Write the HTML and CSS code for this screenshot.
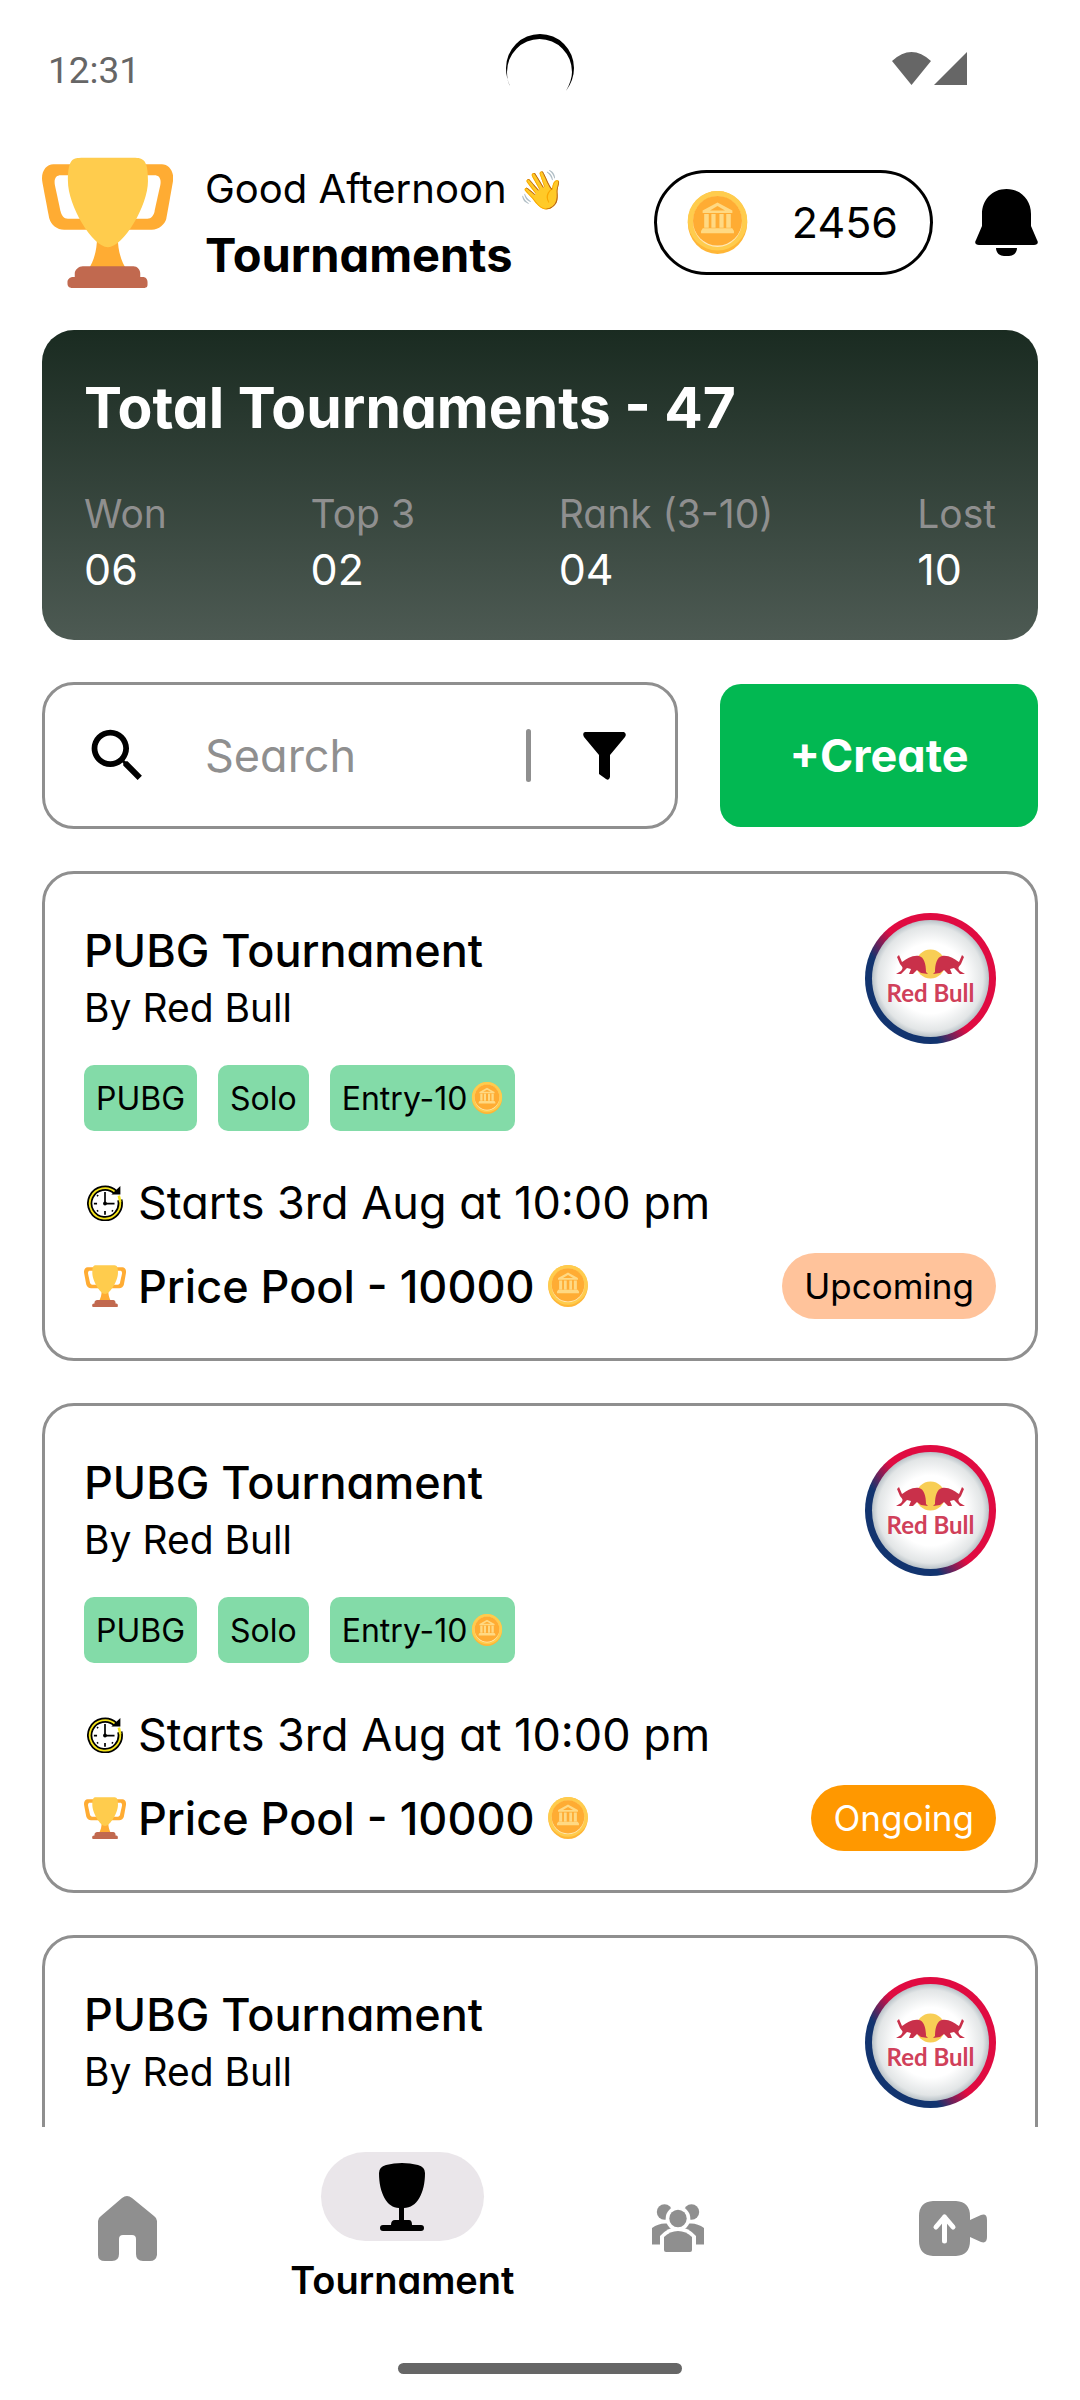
FILE: index.html
```html
<!DOCTYPE html>
<html lang="en">
<head>
<meta charset="utf-8">
<meta name="viewport" content="width=device-width, initial-scale=1">
<title>Tournaments</title>
<link rel="stylesheet" href="styles.css">
</head>
<body>
<svg class="sprite" aria-hidden="true">
  <defs>
    <linearGradient id="ring" x1="0.1" y1="0.75" x2="0.8" y2="0.2">
      <stop offset="0.25" stop-color="#12346f"/>
      <stop offset="0.5" stop-color="#e00b41"/>
    </linearGradient>
    <radialGradient id="plate" cx="0.5" cy="0.5" r="0.5">
      <stop offset="0.6" stop-color="#ffffff"/>
      <stop offset="0.9" stop-color="#e2e5e6"/>
      <stop offset="1" stop-color="#b9c2c8"/>
    </radialGradient>
  </defs>
  <symbol id="trophy" viewBox="0 0 36 36">
    <path fill="#FFAC33" d="M5.123 5h6C12.227 5 13 4.896 13 6V4c0-1.104-.773-2-1.877-2h-8c-2 0-3.583 2.125-3 5 0 0 1.791 9.375 1.917 9.958C2.373 18.5 4.164 20 6.081 20h6.958c1.105 0-.039-1.896-.039-3v-2c0 1.104-.773 2-1.877 2h-4c-1.104 0-1.833-1.042-2-2S3.539 7.667 3.539 7.667C3.206 5.75 4.018 5 5.123 5zm25.812 0h-6C23.831 5 22 4.896 22 6V4c0-1.104 1.831-2 2.935-2h8c2 0 3.584 2.125 3 5 0 0-1.633 9.419-1.771 10-.354 1.5-2.042 3-4 3h-7.146C21.914 20 22 18.104 22 17v-2c0 1.104 1.831 2 2.935 2h4c1.104 0 1.834-1.042 2-2s1.584-7.333 1.584-7.333C32.851 5.75 32.04 5 30.935 5zM20.832 22c0-6.958-2.709 0-2.709 0s-3-6.958-3 0-3.291 10-3.291 10h12.292c-.001 0-3.292-3.042-3.292-10z"/>
    <path fill="#FFCC4D" d="M29.123 6.577c0 6.775-6.77 18.192-11 18.192-4.231 0-11-11.417-11-18.192 0-5.195 1-6.319 3-6.319 1.374 0 6.025-.027 8-.027l7-.001c2.917-.001 4 .684 4 6.347z"/>
    <path fill="#C1694F" d="M27 33c0 1.104.227 2-.877 2h-16C9.018 35 9 34.104 9 33v-1c0-1.104 1.164-2 2.206-2h13.917c1.042 0 1.877.896 1.877 2v1z"/>
    <path fill="#C1694F" d="M29 34.625c0 .76.165 1.375-1.252 1.375H8.498C7.206 36 7 35.385 7 34.625v-.25C7 33.615 7.738 33 8.498 33h19.25c.759 0 1.252.615 1.252 1.375v.25z"/>
  </symbol>
  <symbol id="coin" viewBox="0 0 36 36">
    <ellipse cx="18" cy="18" rx="17" ry="18" fill="#FFB636"/>
    <ellipse cx="18" cy="17" rx="17" ry="17" fill="#FFCC4D"/>
    <ellipse cx="18" cy="17.500" rx="14" ry="14.500" fill="#FFE8B6"/>
    <ellipse cx="18" cy="17" rx="14" ry="14.200" fill="#FFAC33"/>
    <path fill="#FFD983" d="M18 6.500L26.500 11.200V12.600H9.500V11.200zM10.400 13.200h2.600V21h-2.600zM14.500 13.200h2.400V21h-2.400zM19.100 13.200h2.400V21h-2.400zM23 13.200h2.600V21H23zM9.600 21.300h16.800l1 1.500V24.200H8.600V22.800z"/>
    <path fill="#FFAC33" d="M18 8.600l4.300 2.500h-8.600z"/>
  </symbol>
  <symbol id="clock" viewBox="0 0 34 34">
    <path d="M27 7A14.400 14.400 0 1 0 31 14" fill="none" stroke="#000" stroke-width="5"/>
    <path d="M27 7A14.400 14.400 0 1 0 31 14" fill="none" stroke="#f5e41c" stroke-width="1.700"/>
    <path d="M23 9h8.500V1z"/>
    <path d="M30 10l1.500 6" fill="none" stroke="#f5e41c" stroke-width="2.400"/>
    <path d="M17 6.500V17.500H26M17 24.500v3.500M6.500 17.500h3M9.500 9.500l1 1M9.500 25l1-1M24.500 25l-1-1" fill="none" stroke="#000" stroke-width="1.600"/>
    <circle cx="17" cy="17.500" r="1.800"/>
  </symbol>
  <symbol id="badge" viewBox="0 0 131 131">
    <circle cx="65.500" cy="65.500" r="65.500" fill="url(#ring)"/>
    <circle cx="65.500" cy="65.500" r="58.500" fill="url(#plate)"/>
    <circle cx="65.500" cy="51" r="14.500" fill="#f8ce55"/>
    <g id="bull" fill="#c9304a">
      <path d="M61 59C61 51 59 44 54 43C47 42 42 46 37 49L34 42L32 44L35 51C37 54 39 54 36 58L31 61H36L42 55L46 56L44 61H48L52 57L56 60L63 61z"/>
    </g>
    <use href="#bull" transform="matrix(-1 0 0 1 131 0)"/>
  </symbol>
</svg>

<div class="app">
  <div class="status">
    <span class="time">12:31</span>
    <svg class="camera" viewBox="0 0 68 68" aria-hidden="true">
      <path d="M0 34A34 34 0 0 1 68 34Q68 46 60 57Q66 46 66 38A32.500 33 0 0 0 1 38Q1 47 4 52Q0 43 0 34z"/>
    </svg>
    <svg class="signal" viewBox="0 0 75 33" aria-hidden="true">
      <path d="M0 9Q19.500-9 39 9L19.500 33zM75 0V33H42z"/>
    </svg>
  </div>

  <header class="header">
    <svg class="trophy" aria-hidden="true"><use href="#trophy"/></svg>
    <div class="greeting">
      <p class="hello">Good Afternoon <span class="wave">👋</span></p>
      <h1>Tournaments</h1>
    </div>
    <div class="wallet">
      <svg class="coin" aria-hidden="true"><use href="#coin"/></svg>
      <span>2456</span>
    </div>
    <button class="bell" aria-label="Notifications">
      <svg viewBox="0 0 63 67"><path d="M31.500 0C17 0 7 11 7 25V37L1 51C-1 54 1 56 4 56H59C62 56 64 54 62 51L56 37V25C56 11 46 0 31.500 0zM21 59H42C42 64 38 67 34 67H29C25 67 21 64 21 59z"/></svg>
    </button>
  </header>

  <section class="stats">
    <h2>Total Tournaments - 47</h2>
    <dl>
      <div><dt>Won</dt><dd>06</dd></div>
      <div><dt>Top 3</dt><dd>02</dd></div>
      <div><dt>Rank (3-10)</dt><dd>04</dd></div>
      <div><dt>Lost</dt><dd>10</dd></div>
    </dl>
  </section>

  <div class="tools">
    <div class="search">
      <svg class="glass" viewBox="0 0 24 24" aria-hidden="true"><path d="M15.500 14h-.79l-.28-.27C15.410 12.590 16 11.110 16 9.500 16 5.910 13.090 3 9.500 3S3 5.910 3 9.500 5.910 16 9.500 16c1.610 0 3.090-.59 4.230-1.570l.27.28v.79l5 4.990L20.490 19l-4.990-5zm-6 0C7.010 14 5 11.990 5 9.500S7.010 5 9.500 5 14 7.010 14 9.500 11.990 14 9.500 14z"/></svg>
      <input type="text" placeholder="Search" aria-label="Search">
      <span class="divider"></span>
      <button class="filter" aria-label="Filter">
        <svg viewBox="0 0 43 48"><path d="M2 0H41Q44 2 42 5L27 23V45Q26 49 23 47L16 42V23L1 5Q-1 1 2 0z"/></svg>
      </button>
    </div>
    <button class="create">+Create</button>
  </div>

  <main class="list">
    <article class="card">
      <div class="card-head">
        <div>
          <h3>PUBG Tournament</h3>
          <p class="host">By Red Bull</p>
        </div>
        <div class="logo"><svg aria-hidden="true"><use href="#badge"/></svg><span>Red Bull</span></div>
      </div>
      <div class="tags">
        <span class="tag">PUBG</span>
        <span class="tag">Solo</span>
        <span class="tag">Entry-10<svg class="tag-coin" aria-hidden="true"><use href="#coin"/></svg></span>
      </div>
      <p class="line start"><svg class="clock" aria-hidden="true"><use href="#clock"/></svg>Starts 3rd Aug at 10:00 pm</p>
      <div class="foot">
        <p class="line pool"><svg aria-hidden="true"><use href="#trophy"/></svg>Price Pool - 10000<svg aria-hidden="true"><use href="#coin"/></svg></p>
        <span class="state upcoming">Upcoming</span>
      </div>
    </article>

    <article class="card">
      <div class="card-head">
        <div>
          <h3>PUBG Tournament</h3>
          <p class="host">By Red Bull</p>
        </div>
        <div class="logo"><svg aria-hidden="true"><use href="#badge"/></svg><span>Red Bull</span></div>
      </div>
      <div class="tags">
        <span class="tag">PUBG</span>
        <span class="tag">Solo</span>
        <span class="tag">Entry-10<svg class="tag-coin" aria-hidden="true"><use href="#coin"/></svg></span>
      </div>
      <p class="line start"><svg class="clock" aria-hidden="true"><use href="#clock"/></svg>Starts 3rd Aug at 10:00 pm</p>
      <div class="foot">
        <p class="line pool"><svg aria-hidden="true"><use href="#trophy"/></svg>Price Pool - 10000<svg aria-hidden="true"><use href="#coin"/></svg></p>
        <span class="state ongoing">Ongoing</span>
      </div>
    </article>

    <article class="card">
      <div class="card-head">
        <div>
          <h3>PUBG Tournament</h3>
          <p class="host">By Red Bull</p>
        </div>
        <div class="logo"><svg aria-hidden="true"><use href="#badge"/></svg><span>Red Bull</span></div>
      </div>
    </article>
  </main>

  <nav class="nav">
    <a href="#home" aria-label="Home">
      <svg class="home" viewBox="0 0 59 65"><path d="M24 2Q29-2 34 2L56 20Q59 22 59 25V59Q58 65 52 65H45Q38 65 38 58V43Q38 39 34 39H25Q21 39 21 43V58Q21 65 14 65H7Q0 65 0 59V25Q0 22 3 20z"/></svg>
    </a>
    <a href="#tournament" class="active" aria-current="page">
      <span class="chip"><svg viewBox="0 0 46 68"><path d="M7 2Q23-2 39 2Q46 4 46 10C46 30 38 45 25 45V57H30Q33 57 33 62H42a3 3 0 0 1 0 6H4a3 3 0 0 1 0-6H12Q12 57 16 57H20V45C8 45 0 30 0 10Q0 4 7 2z"/></svg></span>
      <span class="label">Tournament</span>
    </a>
    <a href="#teams" aria-label="Teams">
      <svg class="people" viewBox="0 0 52 48">
        <circle cx="12.500" cy="8" r="7.700"/><circle cx="39.500" cy="8" r="7.700"/>
        <path d="M0 40.500V24Q6 19.500 13 19.500H39Q46 19.500 52 24V40.500z"/>
        <path class="gap" d="M8 48V32Q16 23 26 23T44 32V48z"/>
        <circle class="gap" cx="26" cy="14.500" r="12.300"/>
        <circle cx="26" cy="14.500" r="8.700"/>
        <path d="M12 33Q18 27 26 27T40 33V46Q40 48 38 48H14Q12 48 12 46z"/>
      </svg>
    </a>
    <a href="#video" aria-label="Upload video">
      <svg class="video" viewBox="0 0 68 55">
        <path d="M14 0H37Q51 1 51 15V19L62 14Q68 12 68 19V36Q68 43 62 41L51 36V40Q51 54 37 55H14Q0 54 0 40V15Q0 1 14 0z"/>
        <path class="arrow" d="M25.500 40V16M17 26L25.500 16L34 26"/>
      </svg>
    </a>
  </nav>
  <div class="gesture"></div>
</div>
</body>
</html>
```

FILE: styles.css
```css
* {
  box-sizing: border-box;
}

body,
h1,
h2,
h3,
p,
dl,
dd {
  margin: 0;
}

body {
  background: #fff;
  color: #000;
  font-family: Inter, "Open Sans", sans-serif;
  font-feature-settings: "cv11";
}

button {
  padding: 0;
  border: 0;
  background: none;
  font-family: inherit;
  cursor: pointer;
}

svg {
  display: block;
  flex: none;
}

.sprite {
  position: absolute;
  width: 0;
  height: 0;
}

.app {
  display: flex;
  flex-direction: column;
  height: 100vh;
}

/* Status bar */
.status {
  display: grid;
  grid-template-columns: 1fr 68px 1fr;
  align-items: center;
  height: 136px;
  padding: 0 48px;
  color: #666;
}

.time {
  padding-top: 4px;
  font: 37px Roboto, sans-serif;
}

.camera {
  width: 68px;
  height: 68px;
}

.signal {
  width: 75px;
  height: 33px;
  margin-right: 65px;
  justify-self: end;
  fill: #666;
}

/* Header */
.header {
  display: flex;
  align-items: center;
  padding: 20px 42px 42px;
}

.trophy {
  width: 131px;
  height: 131px;
}

.greeting {
  flex: 1;
  margin-left: 32px;
  line-height: 66px;
  white-space: nowrap;
}

.hello {
  height: 66px;
  font-size: 40px;
}

.wave {
  font-size: 38px;
  line-height: 1;
}

h1 {
  font-size: 47px;
  font-weight: 700;
}

.wallet {
  display: flex;
  align-items: center;
  justify-content: space-between;
  width: 279px;
  height: 105px;
  padding: 0 32px 0 29px;
  border: 3px solid #000;
  border-radius: 53px;
  font-size: 43px;
}

.coin {
  width: 63px;
  height: 63px;
}

.bell {
  margin-left: 42px;
}

.bell svg {
  width: 63px;
  height: 67px;
}

/* Totals */
.stats {
  margin: 0 42px;
  padding: 42px;
  border-radius: 32px;
  background: linear-gradient(#1a2b21, #4d5a53);
  color: #fff;
}

h2 {
  margin-bottom: 42px;
  font-size: 57px;
  font-weight: 700;
  line-height: 72px;
}

dl {
  display: flex;
  justify-content: space-between;
}

dt {
  color: #8f8f8f;
  font-size: 39px;
  line-height: 55px;
}

dd {
  font-size: 43px;
  line-height: 57px;
}

/* Search and create */
.tools {
  display: grid;
  grid-template-columns: minmax(0, 2fr) minmax(0, 1fr);
  align-items: center;
  gap: 42px;
  padding: 42px;
}

.search {
  display: flex;
  align-items: center;
  height: 147px;
  padding: 0 49px 0 38px;
  border: 3px solid #8f8f8f;
  border-radius: 32px;
}

.glass {
  width: 69px;
  height: 69px;
}

.search input {
  flex: 1;
  min-width: 0;
  margin-left: 53px;
  padding: 0;
  border: 0;
  outline: 0;
  background: none;
  font: inherit;
  font-feature-settings: inherit;
  font-size: 45px;
}

.search input::placeholder {
  color: #8f8f8f;
  opacity: 1;
}

.divider {
  width: 5px;
  height: 53px;
  margin-right: 52px;
  border-radius: 3px;
  background: #8f8f8f;
}

.filter svg {
  width: 43px;
  height: 48px;
}

.create {
  height: 143px;
  border-radius: 21px;
  background: #02b852;
  color: #fff;
  font-feature-settings: inherit;
  font-size: 45px;
  font-weight: 700;
}

/* Tournament list */
.list {
  display: flex;
  flex: 1;
  flex-direction: column;
  gap: 42px;
  min-height: 0;
  padding: 0 42px;
  overflow-y: auto;
  scrollbar-width: none;
}

.card {
  flex: none;
  min-height: 490px;
  padding: 39px;
  border: 3px solid #8f8f8f;
  border-radius: 32px;
}

.card-head {
  display: flex;
  align-items: center;
  justify-content: space-between;
}

h3 {
  font-size: 45px;
  font-weight: 500;
  line-height: 58px;
}

.host {
  font-size: 39px;
  line-height: 55px;
}

.logo {
  position: relative;
}

.logo svg {
  width: 131px;
  height: 131px;
}

.logo span {
  position: absolute;
  top: 66px;
  left: 0;
  width: 100%;
  color: #d0405a;
  font: 700 24px/28px Lato, sans-serif;
  text-align: center;
}

.tags {
  display: flex;
  gap: 21px;
  margin: 21px 0 42px;
}

.tag {
  display: flex;
  align-items: center;
  height: 66px;
  padding: 0 12px;
  border-radius: 10px;
  background: #83dba8;
  font-size: 32px;
}

.tag-coin {
  width: 32px;
  height: 32px;
  margin-left: 3px;
}

.line {
  display: flex;
  align-items: center;
  gap: 12px;
  font-size: 45px;
  line-height: 59px;
}

.line svg {
  width: 42px;
  height: 42px;
}

.line .clock {
  padding: 3px;
}

.pool {
  font-weight: 500;
}

.foot {
  display: flex;
  align-items: center;
  justify-content: space-between;
  margin-top: 21px;
}

.state {
  height: 66px;
  padding: 0 22px;
  border-radius: 33px;
  font-size: 35px;
  line-height: 66px;
}

.upcoming {
  background: #ffc39b;
}

.ongoing {
  background: #ff9800;
  color: #fff;
}

/* Bottom navigation */
.nav {
  display: grid;
  grid-template-columns: repeat(4, 1fr);
  align-items: center;
  gap: 21px;
  padding: 25px 0 59px;
}

.nav a {
  display: flex;
  flex-direction: column;
  align-items: center;
  gap: 15px;
  color: #000;
  text-decoration: none;
}

.nav svg {
  fill: #8f8f8f;
}

.chip {
  display: flex;
  align-items: center;
  justify-content: center;
  width: 163px;
  height: 89px;
  border-radius: 45px;
  background: #eae6ea;
}

.nav .chip svg {
  width: 46px;
  height: 68px;
  fill: #000;
}

.label {
  font-size: 38px;
  font-weight: 600;
  line-height: 48px;
}

.home {
  width: 59px;
  height: 65px;
}

.people {
  width: 52px;
  height: 48px;
}

.people .gap {
  fill: #fff;
}

.video {
  width: 68px;
  height: 55px;
}

.video .arrow {
  fill: none;
  stroke: #fff;
  stroke-width: 5;
  stroke-linecap: round;
  stroke-linejoin: round;
}

.gesture {
  width: 284px;
  height: 11px;
  margin: 0 auto 26px;
  border-radius: 6px;
  background: #666;
}
```
